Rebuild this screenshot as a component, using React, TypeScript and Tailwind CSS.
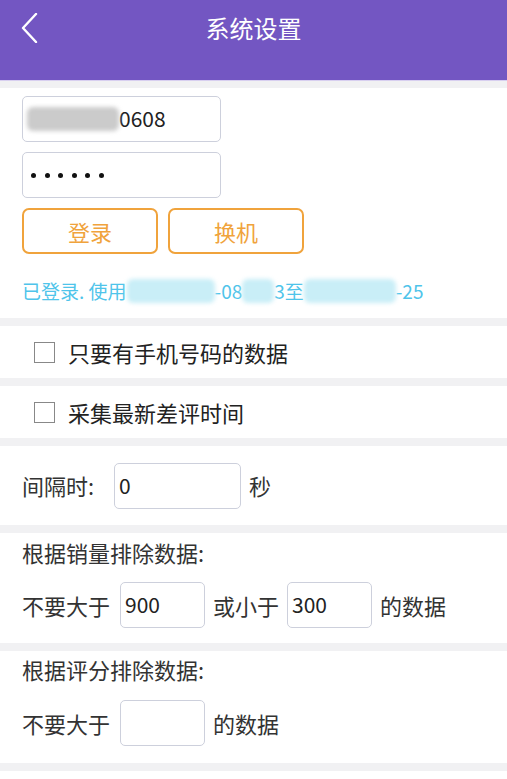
import React from "react";

const font = { fontFamily: '"Noto Sans CJK SC", "Noto Sans", sans-serif' };

function Blur({ w, tone }: { w: number; tone: "gray" | "blue" }) {
  // mosaic block used to hide private numbers
  return (
    <span
      className={
        "inline-block h-[24px] align-middle rounded-[6px] blur-[2px] " +
        (tone === "gray" ? "bg-[#cbcbcb]" : "bg-[#c9eef7]")
      }
      style={{ width: w }}
    />
  );
}

function Box({ value, w }: { value: string; w: string }) {
  return (
    <div
      className={
        "h-[46px] border border-[#cdd0dc] rounded-[5px] flex items-center pl-[4px] text-[21px] text-[#222] " +
        w
      }
    >
      {value}
    </div>
  );
}

function Gap() {
  return <div className="h-[8px] bg-[#f1f1f3]" />;
}

export default function App() {
  return (
    <main className="w-[507px] h-[779px] bg-white overflow-hidden flex flex-col" style={font}>
      {/* header */}
      <header className="h-[80px] bg-[#7356c2] flex items-start relative">
        <svg className="absolute left-[20px] top-[13px]" width="20" height="30" viewBox="0 0 20 30">
          <path d="M16 1 L3 15 L16 29" stroke="#fff" strokeWidth="2.4" fill="none" strokeLinecap="round" strokeLinejoin="round" />
        </svg>
        <h1 className="w-full text-center text-white text-[24px] leading-[56px]">系统设置</h1>
      </header>
      <div className="h-[1px] bg-[#d8cff0]" />
      <div className="h-[7px] bg-[#f1f1f3]" />

      {/* login */}
      <section className="px-[22px] pt-[8px] pb-[14px]">
        <div className="h-[46px] w-[199px] border border-[#cdd0dc] rounded-[5px] flex items-center pl-[4px] text-[21px] text-[#222]">
          <Blur w={92} tone="gray" />
          <span>0608</span>
        </div>
        <div className="mt-[10px] h-[46px] w-[199px] border border-[#cdd0dc] rounded-[5px] flex items-center pl-[8px] gap-[8.5px]">
          {[0, 1, 2, 3, 4, 5].map((i) => (
            <span key={i} className="w-[5px] h-[5px] rounded-full bg-[#111]" />
          ))}
        </div>
        <div className="mt-[10px] flex gap-[10px]">
          <button className="w-[136px] h-[46px] border-2 border-[#f0a33c] rounded-[7px] text-[#f0a33c] text-[22px]">登录</button>
          <button className="w-[136px] h-[46px] border-2 border-[#f0a33c] rounded-[7px] text-[#f0a33c] text-[22px]">换机</button>
        </div>
        <p className="mt-[24px] text-[19px] text-[#4fc4ea] leading-[26px] flex items-center whitespace-nowrap">
          <span>已登录. 使用</span>
          <Blur w={88} tone="blue" />
          <span>-08</span>
          <Blur w={32} tone="blue" />
          <span>3至</span>
          <Blur w={92} tone="blue" />
          <span>-25</span>
        </p>
      </section>
      <Gap />

      {/* checkboxes */}
      {["只要有手机号码的数据", "采集最新差评时间"].map((t, i) => (
        <React.Fragment key={t}>
          {i > 0 && <Gap />}
          <label className="h-[52px] flex items-center pl-[34px] gap-[13px] text-[22px] text-[#222]">
            <span className="w-[21px] h-[21px] border border-[#888] bg-white" />
            {t}
          </label>
        </React.Fragment>
      ))}
      <Gap />

      {/* interval */}
      <section className="h-[79px] flex items-center px-[22px] text-[22px] text-[#333]">
        <span className="w-[92px]">间隔时:</span>
        <Box value="0" w="w-[127px]" />
        <span className="ml-[8px]">秒</span>
      </section>
      <Gap />

      {/* sales */}
      <section className="px-[22px] pt-[4px] pb-[15px] text-[22px] text-[#333]">
        <p className="leading-[30px]">根据销量排除数据:</p>
        <div className="mt-[15px] flex items-center">
          <span className="mr-[10px]">不要大于</span>
          <Box value="900" w="w-[85px]" />
          <span className="mx-[8px]">或小于</span>
          <Box value="300" w="w-[85px]" />
          <span className="ml-[8px]">的数据</span>
        </div>
      </section>
      <Gap />

      {/* rating */}
      <section className="px-[22px] pt-[3px] pb-[17px] text-[22px] text-[#333]">
        <p className="leading-[30px]">根据评分排除数据:</p>
        <div className="mt-[16px] flex items-center">
          <span className="mr-[10px]">不要大于</span>
          <Box value="" w="w-[85px]" />
          <span className="ml-[8px]">的数据</span>
        </div>
      </section>
      <Gap />
    </main>
  );
}
